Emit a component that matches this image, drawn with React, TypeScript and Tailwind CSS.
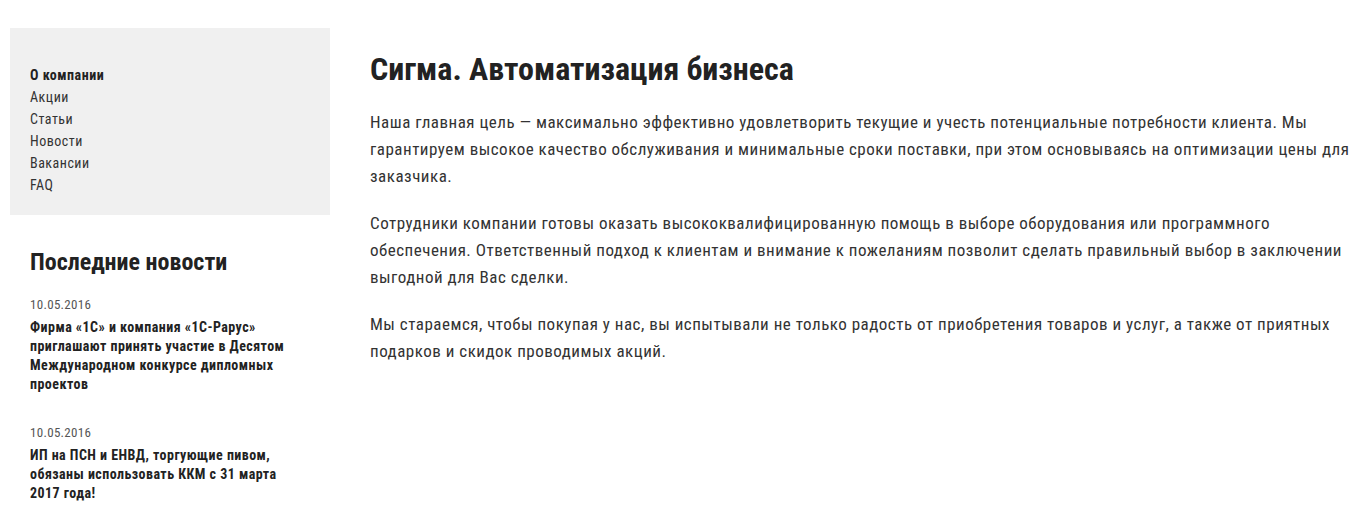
const menu = ['О компании', 'Акции', 'Статьи', 'Новости', 'Вакансии', 'FAQ']

const news = [
  {
    date: '10.05.2016',
    title: 'Фирма «1С» и компания «1С-Рарус» приглашают принять участие в Десятом Международном конкурсе дипломных проектов',
  },
  {
    date: '10.05.2016',
    title: 'ИП на ПСН и ЕНВД, торгующие пивом, обязаны использовать ККМ с 31 марта 2017 года!',
  },
]

export default function App() {
  return (
    <div className="flex gap-10 px-[10px] pt-[28px] font-['Roboto_Condensed',_Roboto,_sans-serif] text-[#333] bg-white min-h-[525px]">
      <aside className="w-[320px] shrink-0">
        <nav className="bg-[#f0f0f0] px-5 pt-[36px] pb-[19px]">
          <ul className="text-[14px] leading-[22px] tracking-[0.5px]">
            {menu.map((item, i) => (
              <li key={item} className={i === 0 ? 'font-bold text-[#222]' : ''}>
                {item}
              </li>
            ))}
          </ul>
        </nav>

        <div className="pl-5 pr-8 pt-[32px]">
          <h3 className="text-[24px] leading-[30px] font-bold text-[#222]">Последние новости</h3>
          <div className="mt-[18px] flex flex-col gap-[29px]">
            {news.map((n) => (
              <div key={n.title}>
                <div className="text-[13px] leading-[19px] tracking-[0.3px] text-[#555]">{n.date}</div>
                <a className="mt-1 block text-[14px] leading-[19px] tracking-[0.45px] font-bold text-[#222]">{n.title}</a>
              </div>
            ))}
          </div>
        </div>
      </aside>

      <main className="flex-1 pt-[24px]">
        <h1 className="text-[32px] leading-[35px] font-bold text-[#222]">Сигма. Автоматизация бизнеса</h1>
        <div className="mt-[22px] flex flex-col gap-5 text-[17px] leading-[27px] tracking-[0.5px]">
          <p>
            Наша главная цель — максимально эффективно удовлетворить текущие и учесть потенциальные потребности клиента. Мы
            гарантируем высокое качество обслуживания и минимальные сроки поставки, при этом основываясь на оптимизации цены
            для заказчика.
          </p>
          <p>
            Сотрудники компании готовы оказать высококвалифицированную помощь в выборе оборудования или программного
            обеспечения. Ответственный подход к клиентам и внимание к пожеланиям позволит сделать правильный выбор в
            заключении выгодной для Вас сделки.
          </p>
          <p>
            Мы стараемся, чтобы покупая у нас, вы испытывали не только радость от приобретения товаров и услуг, а также от
            приятных подарков и скидок проводимых акций.
          </p>
        </div>
      </main>
    </div>
  )
}
